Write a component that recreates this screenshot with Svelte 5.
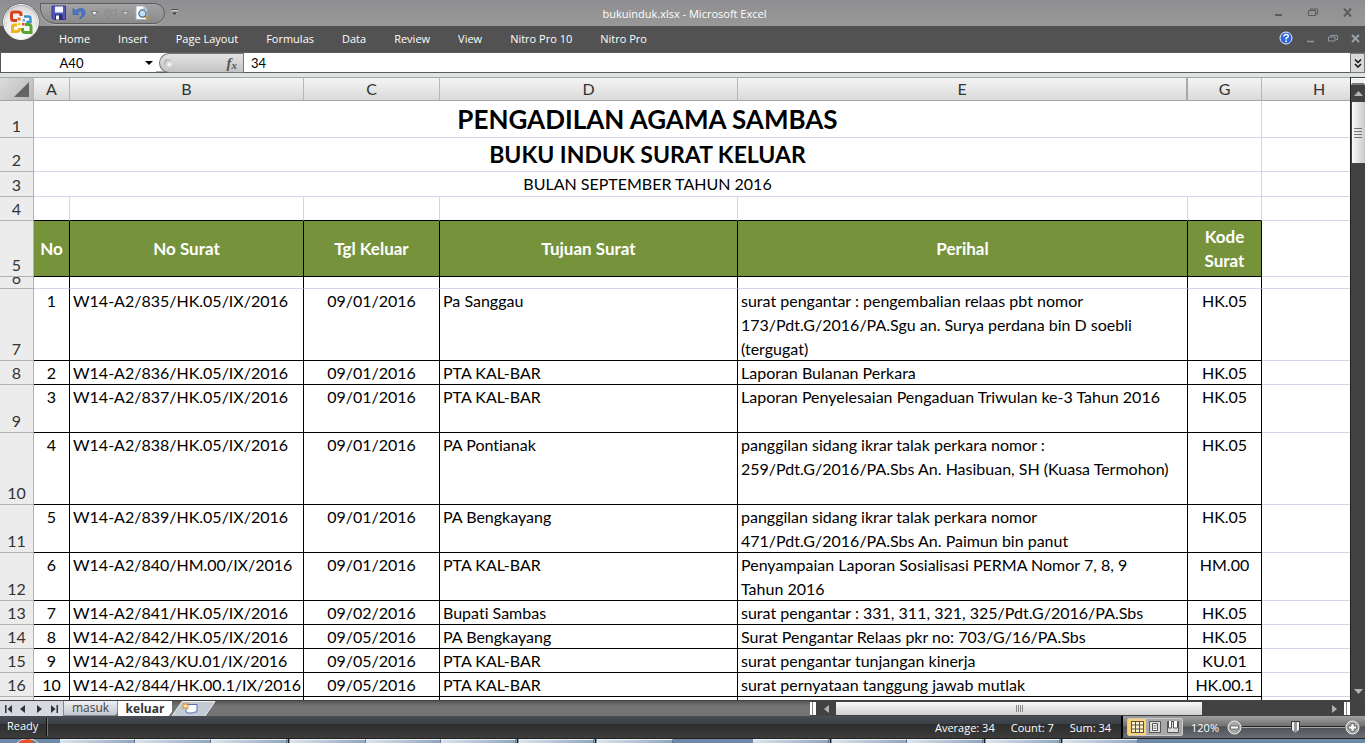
<script>
  const menus = ['Home', 'Insert', 'Page Layout', 'Formulas', 'Data', 'Review', 'View', 'Nitro Pro 10', 'Nitro Pro'];
  const letters = ['A', 'B', 'C', 'D', 'E', 'G', 'H'];
  const heads = ['No', 'No Surat', 'Tgl Keluar', 'Tujuan Surat', 'Perihal', 'Kode Surat'];
  const records = [
    { row: 7, lines: 3, cells: ['1', 'W14-A2/835/HK.05/IX/2016', '09/01/2016', 'Pa Sanggau', 'surat pengantar : pengembalian relaas pbt nomor\n173/Pdt.G/2016/PA.Sgu an. Surya perdana bin D soebli\n(tergugat)', 'HK.05'] },
    { row: 8, lines: 1, cells: ['2', 'W14-A2/836/HK.05/IX/2016', '09/01/2016', 'PTA KAL-BAR', 'Laporan Bulanan Perkara', 'HK.05'] },
    { row: 9, lines: 2, cells: ['3', 'W14-A2/837/HK.05/IX/2016', '09/01/2016', 'PTA KAL-BAR', 'Laporan Penyelesaian Pengaduan Triwulan ke-3 Tahun 2016', 'HK.05'] },
    { row: 10, lines: 3, cells: ['4', 'W14-A2/838/HK.05/IX/2016', '09/01/2016', 'PA Pontianak', 'panggilan sidang ikrar talak perkara nomor :\n259/Pdt.G/2016/PA.Sbs An. Hasibuan, SH (Kuasa Termohon)', 'HK.05'] },
    { row: 11, lines: 2, cells: ['5', 'W14-A2/839/HK.05/IX/2016', '09/01/2016', 'PA Bengkayang', 'panggilan sidang ikrar talak perkara nomor\n471/Pdt.G/2016/PA.Sbs An. Paimun bin panut', 'HK.05'] },
    { row: 12, lines: 2, cells: ['6', 'W14-A2/840/HM.00/IX/2016', '09/01/2016', 'PTA KAL-BAR', 'Penyampaian Laporan Sosialisasi PERMA Nomor 7, 8, 9\nTahun 2016', 'HM.00'] },
    { row: 13, lines: 1, cells: ['7', 'W14-A2/841/HK.05/IX/2016', '09/02/2016', 'Bupati Sambas', 'surat pengantar : 331, 311, 321, 325/Pdt.G/2016/PA.Sbs', 'HK.05'] },
    { row: 14, lines: 1, cells: ['8', 'W14-A2/842/HK.05/IX/2016', '09/05/2016', 'PA Bengkayang', 'Surat Pengantar Relaas pkr no: 703/G/16/PA.Sbs', 'HK.05'] },
    { row: 15, lines: 1, cells: ['9', 'W14-A2/843/KU.01/IX/2016', '09/05/2016', 'PTA KAL-BAR', 'surat pengantar tunjangan kinerja', 'KU.01'] },
    { row: 16, lines: 1, cells: ['10', 'W14-A2/844/HK.00.1/IX/2016', '09/05/2016', 'PTA KAL-BAR', 'surat pernyataan tanggung jawab mutlak', 'HK.00.1'] }
  ];
  const tasks = [
    ['gap', 60], ['task', 75], ['task', 76], ['task', 76], ['sep', 3], ['task', 76], ['task', 75], ['task', 75],
    ['sep', 3], ['task', 75], ['sep', 3], ['task', 76], ['gap', 80], ['task', 76], ['sep', 3], ['task', 75],
    ['task', 76], ['sep', 3], ['task', 74], ['sep', 3], ['task', 75]
  ];
  let zoom = $state(52);
</script>

<div class="app">
  <header class="title-bar">
    <button class="office" aria-label="Office Button">
      <svg width="40" height="40" viewBox="0 0 40 40">
        <defs>
          <radialGradient id="orb" cx=".5" cy=".75" r=".75">
            <stop offset="0" stop-color="#fff" /><stop offset=".55" stop-color="#eeeeef" /><stop offset="1" stop-color="#a9aaad" />
          </radialGradient>
        </defs>
        <circle cx="20" cy="20" r="18.5" fill="#555" />
        <circle cx="20" cy="20" r="17.5" fill="url(#orb)" stroke="#f4f4f4" />
        <path d="M4 20a16 16 0 0 1 32 0q-16-5-32 0z" fill="#fff" opacity=".45" />
        <g fill="none" stroke-width="3">
          <path d="M16 18.500H12.500a2 2 0 0 1-2-2V12q0-2 2-2H17q3 0 3 2.500V14" stroke="#d8431c" />
          <path d="M23 14.500h4.500q2 0 2 2v3.500h-4" stroke="#3c8fcc" stroke-width="2.400" />
          <path d="M24 22.500h3.500q2.500 0 2.500 2.500v5.500h-5.500q-3 0-3-2.500V26" stroke="#5aa52e" />
          <path d="M16 23h-2.500q-2 0-2 2v4.500h4q3 0 3-3V26" stroke="#efb51d" />
        </g>
        <path d="M16.500 15.500h3v3h-3z" fill="#e76a2d" /><path d="M21.500 17h2.500v2.500h-2.500z" fill="#6aaedd" /><path d="M17 21h2.500v2.500H17z" fill="#f4c83c" /><path d="M21 21h2.500v2.500H21z" fill="#d5552a" />
      </svg>
    </button>
    <div class="quick">
      <button aria-label="Save"><svg width="16" height="16" viewBox="0 0 16 16"><path d="M1 1h13.500v13.500H2.500L1 13z" fill="#5358bd" stroke="#343795" /><path d="M4 1.500h8v6H4z" fill="#f4f6ff" /><path d="M4 9.500h7.500v5H4z" fill="#272a6d" /><path d="M5 10.500h3v4H5z" fill="#fff" /></svg></button>
      <button aria-label="Undo"><svg width="14" height="14" viewBox="0 0 14 14"><path d="M1 2.500v6h6L5 6.500q4-3 5 0 .6 3-2.500 6.500 6-3 5.500-7.500Q11.500 0 3.200 4.500z" fill="#4a78cf" stroke="#2b55a8" stroke-width=".6" /></svg></button>
      <button aria-label="Undo list"><svg width="7" height="5" viewBox="0 0 7 5"><path d="M.5.5h6L3.500 4.500z" fill="#fff" stroke="#555" stroke-width=".7" /></svg></button>
      <button aria-label="Redo" disabled><svg width="14" height="14" viewBox="0 0 14 14"><path d="M13 3v6H7.500L9.500 7Q5 3 3.500 7q-.5 3 2.500 5.500-5-2-4.500-6.500Q3 1 11 5z" fill="#9b9ca0" stroke="#818286" stroke-width=".6" /></svg></button>
      <button aria-label="Redo list" disabled><svg width="7" height="5" viewBox="0 0 7 5"><path d="M.5.5h6L3.500 4.500z" fill="#ccc" stroke="#777" stroke-width=".7" /></svg></button>
      <button aria-label="Print Preview"><svg width="16" height="16" viewBox="0 0 16 16"><path d="M2 1h8l3 3v10.500H2z" fill="#fff" stroke="#a5b1c4" /><path d="M10 1v3h3" fill="#d5deeb" stroke="#8293ad" stroke-width=".7" /><path d="M11 11l3.500 3.500" stroke="#c98f26" stroke-width="2.400" /><circle cx="8.500" cy="8.500" r="3.600" fill="#bfe0f4" stroke="#536985" stroke-width="1.300" /></svg></button>
    </div>
    <button class="custom" aria-label="Customize Quick Access Toolbar"><svg width="7" height="8" viewBox="0 0 7 8"><path d="M0 .5h7" stroke="#4b4b4b" /><path d="M0 1.500h7" stroke="#ccc" /><path d="M.5 3h6L3.500 7z" fill="#444" stroke="#ccc" stroke-width=".5" /></svg></button>
    <h1>bukuinduk.xlsx - Microsoft Excel</h1>
    <div class="window-buttons">
      <button aria-label="Minimize"><svg width="9" height="9" viewBox="0 0 9 9"><path d="M1 7h7" stroke="#5b5b5b" stroke-width="2" /></svg></button>
      <button aria-label="Restore"><svg width="10" height="9" viewBox="0 0 10 9"><path d="M2.500 2.500V1h7v5H8M.5 2.500h7v5h-7z" fill="none" stroke="#5b5b5b" /></svg></button>
      <button aria-label="Close"><svg width="9" height="9" viewBox="0 0 9 9"><path d="M1 .5l7 8M8 .5l-7 8" stroke="#5b5b5b" stroke-width="2" /></svg></button>
    </div>
  </header>

  <nav class="ribbon" aria-label="Ribbon">
    {#each menus as m}<button>{m}</button>{/each}
    <div class="book-buttons">
      <button aria-label="Help"><svg width="14" height="14" viewBox="0 0 14 14"><circle cx="7" cy="7" r="6" fill="#2d67dd" stroke="#e6efff" /><path d="M4.800 5.500Q5 3.500 7.200 3.500T9.300 5.300Q9.200 6.500 7.100 7.300V8.500" fill="none" stroke="#fff" stroke-width="1.500" /><path d="M6.300 9.500H8V11H6.300z" fill="#fff" /></svg></button>
      <button aria-label="Minimize workbook"><svg width="9" height="9" viewBox="0 0 9 9"><path d="M1 7.500h7" stroke="#8e97a2" stroke-width="1.500" /></svg></button>
      <button aria-label="Restore workbook"><svg width="10" height="9" viewBox="0 0 10 9"><path d="M2.500 2.500V1.500h7v4H8M.5 3h6.500v4H.5z" fill="none" stroke="#8e97a2" /></svg></button>
      <button aria-label="Close workbook"><svg width="9" height="9" viewBox="0 0 9 9"><path d="M1 1l7 7M8 1l-7 7" stroke="#98a1ac" stroke-width="2" /></svg></button>
    </div>
  </nav>

  <div class="formula-bar">
    <input class="name-box" aria-label="Name Box" value="A40" />
    <button class="name-list" aria-label="Name list"><svg width="8" height="4" viewBox="0 0 8 4"><path d="M0 0h8L4 4z" /></svg></button>
    <div class="fx-area">
      <span class="knob"></span>
      <button aria-label="Insert Function"><i>f</i><i class="sub">x</i></button>
    </div>
    <input class="formula" aria-label="Formula Bar" value="34" />
    <button class="expand" aria-label="Expand Formula Bar"><svg width="8" height="9" viewBox="0 0 8 9"><path d="M1 .5l3 3 3-3M1 5l3 3 3-3" fill="none" stroke="#111" stroke-width="1.500" /></svg></button>
  </div>

  <main>
    <div class="sheet">
      <table>
        <colgroup>
          <col class="c-num" /><col class="c-a" /><col class="c-b" /><col class="c-c" /><col class="c-d" /><col class="c-e" /><col class="c-g" /><col />
        </colgroup>
        <thead>
          <tr>
            <th class="corner"><svg width="15" height="15" viewBox="0 0 15 15"><path d="M15 0v15H0z" fill="#646464" /></svg></th>
            {#each letters as l}<th scope="col" class:hidden-next={l === 'E'} class:last={l === 'H'}>{l}</th>{/each}
          </tr>
        </thead>
        <tbody>
          <tr class="r1"><th scope="row">1</th><td colspan="6" class="big">PENGADILAN AGAMA SAMBAS</td><td></td></tr>
          <tr class="r2"><th scope="row">2</th><td colspan="6" class="mid">BUKU INDUK SURAT KELUAR</td><td></td></tr>
          <tr class="r3"><th scope="row">3</th><td colspan="6" class="center">BULAN SEPTEMBER TAHUN 2016</td><td></td></tr>
          <tr class="r4"><th scope="row">4</th>{#each heads as _}<td></td>{/each}<td></td></tr>
          <tr class="r5"><th scope="row">5</th>{#each heads as h}<td class="head">{h}</td>{/each}<td></td></tr>
          <tr class="r6"><th scope="row"><div class="clip">6</div></th>{#each heads as _}<td></td>{/each}<td></td></tr>
          {#each records as r}
            <tr class="rec lines-{r.lines}">
              <th scope="row">{r.row}</th>
              {#each r.cells as c}<td><div class="cell">{c}</div></td>{/each}
              <td></td>
            </tr>
          {/each}
          <tr class="rec lines-1"><th scope="row"></th>{#each heads as _}<td></td>{/each}<td></td></tr>
        </tbody>
      </table>
    </div>
    <div class="v-scroll">
      <span class="split"></span>
      <button aria-label="Scroll up"><svg width="9" height="5" viewBox="0 0 9 5"><path d="M0 5h9L4.500 0z" fill="#b4b4b4" /></svg></button>
      <span class="v-thumb"><i></i><i></i><i></i><i></i></span>
      <button class="down" aria-label="Scroll down"><svg width="9" height="5" viewBox="0 0 9 5"><path d="M0 0h9L4.500 5z" fill="#b4b4b4" /></svg></button>
    </div>
  </main>

  <div class="tab-bar">
    <div class="tab-nav">
      <button aria-label="First sheet"><svg width="7" height="8" viewBox="0 0 7 8"><path d="M0 0h1.500v8H0zM7 0v8L2.500 4z" fill="#333" /></svg></button>
      <button aria-label="Previous sheet"><svg width="7" height="8" viewBox="0 0 7 8"><path d="M5 0v8L0 4z" fill="#333" /></svg></button>
      <button aria-label="Next sheet"><svg width="7" height="8" viewBox="0 0 7 8"><path d="M1 0v8l5-4z" fill="#333" /></svg></button>
      <button aria-label="Last sheet"><svg width="7" height="8" viewBox="0 0 7 8"><path d="M5.500 0H7v8H5.500zM0 0v8l4.500-4z" fill="#333" /></svg></button>
    </div>
    <button class="tab">masuk</button>
    <button class="tab active">keluar</button>
    <button class="new-tab" aria-label="Insert Worksheet">
      <svg width="44" height="15" viewBox="0 0 44 15">
        <path d="M0 15L10 .5H43L33 15z" fill="#c3cad3" /><path d="M0 15L10 .5H43L33 15" fill="none" stroke="#eef1f5" />
        <path d="M14 3.500h11v7q-4 2-9 1.500l-2-1z" fill="#fafcff" stroke="#5773ad" /><path d="M25 8l-3 4h3z" fill="#8aa1cf" />
        <path d="M13.500 1v8M9.500 5h8M10.500 2l6 6M16.500 2l-6 6" stroke="#e8962e" stroke-width="1.200" /><circle cx="13.500" cy="5" r="1.500" fill="#fff2b5" />
      </svg>
    </button>
    <div class="h-scroll">
      <span class="h-split"></span>
      <button aria-label="Scroll left"><svg width="5" height="8" viewBox="0 0 5 8"><path d="M5 0v8L0 4z" fill="#b4b4b4" /></svg></button>
      <div class="h-track"><span class="h-thumb"><i></i><i></i><i></i><i></i></span></div>
      <button aria-label="Scroll right"><svg width="5" height="8" viewBox="0 0 5 8"><path d="M0 0v8l5-4z" fill="#b4b4b4" /></svg></button>
      <span class="h-split"></span>
    </div>
  </div>

  <footer class="status">
    <span class="ready">Ready</span>
    <span class="stat">Average: 34</span><span class="stat">Count: 7</span><span class="stat">Sum: 34</span>
    <div class="view-zone">
      <div class="views">
        <button class="on" aria-label="Normal"><svg width="13" height="12" viewBox="0 0 13 12"><path d="M0 0h13v12H0z" fill="#56534a" /><path d="M1 1h3v2.500H1zM5 1h3v2.500H5zM9 1h3v2.500H9zM1 4.500h3v3H1zM5 4.500h3v3H5zM9 4.500h3v3H9zM1 8.500h3V11H1zM5 8.500h3V11H5zM9 8.500h3V11H9z" fill="#fff5cc" /></svg></button>
        <button aria-label="Page Layout"><svg width="12" height="12" viewBox="0 0 12 12"><path d="M.5.5h11v11H.5z" fill="#ddd" stroke="#555" /><path d="M3.500 2.500h5v7h-5z" fill="#fff" stroke="#555" /><path d="M4.500 4.500h3M4.500 6h3M4.500 7.500h3" stroke="#777" stroke-width=".8" /></svg></button>
        <button aria-label="Page Break Preview"><svg width="12" height="12" viewBox="0 0 12 12"><path d="M.5.5h11v11H.5z" fill="#ddd" stroke="#555" /><path d="M1.500 0v7h3V0M6.500 0v7h4V0" fill="#fff" stroke="#555" /></svg></button>
      </div>
      <button class="percent">120%</button>
      <button class="round" aria-label="Zoom out"><svg width="15" height="15" viewBox="0 0 15 15"><circle cx="7.500" cy="7.500" r="6.500" fill="#a7a7a7" stroke="#ededed" /><path d="M3.500 6h8v3h-8z" fill="#fff" stroke="#555" stroke-width=".8" /></svg></button>
      <input type="range" aria-label="Zoom" min="0" max="100" bind:value={zoom} />
      <button class="round" aria-label="Zoom in"><svg width="15" height="15" viewBox="0 0 15 15"><circle cx="7.500" cy="7.500" r="6.500" fill="#a7a7a7" stroke="#ededed" /><path d="M6 3.500h3V6h2.500v3H9v2.500H6V9H3.500V6H6z" fill="#fff" stroke="#555" stroke-width=".8" /></svg></button>
    </div>
  </footer>

  <div class="taskbar">
    <span class="start"></span>
    {#each tasks as [kind, w]}<span class={kind} style="width:{w}px"></span>{/each}
  </div>
</div>

<style>
  :global(body) { margin: 0; overflow: hidden; }
  * { box-sizing: border-box; }
  .app { height: 100vh; display: flex; flex-direction: column; overflow: hidden; font-family: "Open Sans", "Noto Sans", sans-serif; font-size: 11px; background: #fff; }
  button { border: 0; padding: 0; margin: 0; background: none; font: inherit; color: inherit; display: flex; align-items: center; justify-content: center; }
  svg { display: block; flex: none; }

  .title-bar { position: relative; flex: none; height: 26px; display: flex; align-items: center; background: linear-gradient(#8d8d93, #929292 30%, #989898); padding-left: 40px; }
  .office { position: absolute; left: 1px; top: 2px; z-index: 2; }
  .quick { height: 21px; width: 125px; padding: 0 10px 0 10px; display: flex; align-items: center; gap: 5px; border: 1px solid #5c5c5c; border-radius: 0 11px 11px 16px; background: linear-gradient(#a3a3a3, #8a8a8a); box-shadow: 0 1px 0 #b5b5b5; }
  .custom { margin-left: 6px; }
  h1 { flex: 1; margin: 0; font-weight: 400; font-size: 11px; color: #fff; text-align: center; padding: 0 0 0 44px; }
  .window-buttons { display: flex; gap: 25px; padding: 0 13px 2px 0; width: 218px; justify-content: flex-end; }

  .ribbon { flex: none; height: 26px; background: #525252; color: #fff; display: flex; align-items: center; padding: 0 5px 2px 59px; gap: 28px; }
  .book-buttons { margin-left: auto; display: flex; align-items: center; gap: 13px; }

  .formula-bar { flex: none; height: 25px; padding: 1px 0 4px; display: flex; background: linear-gradient(#5c5c5c 1px, #fff 1px 19px, #5c5c5c 20px 21px, #dfe3e3 21px); }
  input { font: inherit; border: 0; outline: 0; min-width: 0; padding: 0; }
  .name-box { width: 142px; text-align: center; background: #fff; font: 13px Lato, "Open Sans", sans-serif; border-left: 1px solid #555; border-bottom: 1px solid #5c5c5c; }
  .name-list { width: 14px; background: #fff; border-bottom: 1px solid #5c5c5c; }
  .fx-area { width: 84px; margin-left: 3px; display: flex; align-items: center; justify-content: space-between; border: 1px solid #777; border-right: 0; border-radius: 11px 0 0 11px; background: linear-gradient(#e4e4e4, #c3c3c3); padding: 0 6px 0 4px; }
  .knob { width: 8px; height: 8px; border-radius: 50%; background: radial-gradient(circle at 70% 70%, #fff, #999); }
  .fx-area button { font-family: "Liberation Serif", serif; font-size: 15px; font-weight: 700; color: #555; }
  .sub { font-size: 11px; padding-top: 3px; }
  .formula { flex: 1; padding-left: 7px; font: 13px Lato, "Open Sans", sans-serif; background: #fff; border-left: 1px solid #777; border-bottom: 1px solid #5c5c5c; }
  .expand { width: 15px; background: #d8d8d8; border: 1px solid #777; }

  main { flex: 1; min-height: 0; display: flex; }
  .sheet { flex: 1; min-width: 0; overflow: hidden; }
  table { width: 100%; table-layout: fixed; border-collapse: separate; border-spacing: 0; font: 16px/24px Lato, "Open Sans", sans-serif; font-variant-ligatures: none; color: #000; }
  .c-num { width: 34px; } .c-a { width: 36px; } .c-b { width: 234px; } .c-c { width: 136px; }
  .c-d { width: 298px; } .c-e { width: 450px; } .c-g { width: 74px; }
  th { font-weight: 400; color: #333; padding: 0; }
  thead th { height: 24px; line-height: 22px; background: linear-gradient(#f4f4f4, #dadada); border: solid #a6a6a6; border-width: 1px 1px 1px 0; border-right-color: #b6b6b6; }
  thead th.hidden-next { border-right: 2px solid #a9a9a9; }
  thead th.last { border-right: 0; padding-left: 26px; }
  thead .corner { background: linear-gradient(135deg, #dcdcdc, #b8b8b8); }
  .corner svg { margin: 0 4px 0 auto; }
  tbody th { background: #ececec; border-right: 1px solid #b1b1b1; border-bottom: 1px solid #b1b1b1; vertical-align: bottom; line-height: 22px; }
  td { padding: 0 3px; border-right: 1px solid #d0d7e5; border-bottom: 1px solid #d0d7e5; vertical-align: top; }
  td:last-child { border-right: 0; }
  .r1 { height: 37px; } .r2 { height: 34px; } .r3 { height: 25px; } .r4 { height: 24px; } .r5 { height: 56px; } .r6 { height: 12px; }
  .big, .mid, .center { text-align: center; vertical-align: middle; }
  .big { font-size: 26px; font-weight: 700; line-height: 36px; }
  .mid { font-size: 23px; font-weight: 700; line-height: 33px; }
  .r4 td:not(:last-child), .r5 td:not(:last-child) { border-bottom-color: #000; }
  .r5 td:not(:last-child), .r6 td:not(:last-child), .rec td:not(:last-child) { border-right-color: #000; }
  .rec td:not(:last-child) { border-bottom-color: #000; }
  .head { background: #76933c; color: #fff; font-size: 17px; font-weight: 700; text-align: center; vertical-align: middle; }
  .clip { height: 11px; overflow: hidden; display: flex; align-items: flex-end; justify-content: center; line-height: 21px; }
  .lines-1 { height: 24px; } .lines-2 { height: 48px; } .lines-3 { height: 72px; }
  .cell { white-space: pre; line-height: 24px; height: 23px; }
  .lines-2 .cell { height: 47px; }
  .lines-3 .cell { height: 71px; }
  .rec td:nth-child(2), .rec td:nth-child(4), .rec td:nth-child(7) { text-align: center; padding: 0; }

  .v-scroll { flex: none; width: 15px; background: #424242; border-left: 1px solid #222; display: flex; flex-direction: column; align-items: center; }
  .split { align-self: stretch; height: 7px; margin-top: 1px; background: #eee; border: 1px solid #fff; border-bottom: 2px solid #777; }
  .v-scroll button { height: 17px; width: 14px; }
  .v-thumb { width: 13px; height: 61px; background: linear-gradient(90deg, #fafafa, #c9c9c9); display: flex; flex-direction: column; align-items: center; justify-content: center; gap: 2px; }
  .v-thumb i { width: 8px; height: 1px; background: #777; }
  .v-scroll .down { margin-top: auto; }

  .tab-bar { flex: none; height: 16px; display: flex; background: linear-gradient(#555, #747474 5px, #747474); border-top: 1px solid #444; }
  .tab-nav { width: 63px; display: flex; justify-content: space-around; background: #d6dae0; padding: 0 1px; }
  .tab { width: 55px; font-size: 12px; line-height: 14px; background: linear-gradient(#eef0f3, #c2c8d1); color: #444; border: 1px solid #888; border-top: 0; clip-path: polygon(0 0, 100% 0, 100% 70%, 94% 100%, 0 100%); }
  .tab.active { width: 54px; background: #fff; font-weight: 700; border: 0; color: #333; }
  .new-tab { width: 44px; }
  .h-scroll { margin-left: auto; width: 555px; display: flex; align-items: stretch; background: #424242; padding-right: 15px; }
  .h-split { width: 6px; margin: 1px 0; background: linear-gradient(90deg, #fff 2px, #888 2px 3px, #fff 3px); }
  .h-scroll button { width: 20px; }
  .h-track { flex: 1; display: flex; }
  .h-thumb { width: 75%; margin: 1px 0; background: linear-gradient(#fafafa, #d0d0d0); display: flex; align-items: center; justify-content: center; gap: 1px; }
  .h-thumb i { width: 1px; height: 7px; background: #888; }

  .status { flex: none; height: 22px; display: flex; align-items: center; color: #fff; background: linear-gradient(#484c55, #3b3f47 8px, #2d2d2d 8px, #3c3c3b); }
  .ready { flex: 1; padding-left: 7px; }
  .ready::after { content: ""; display: inline-block; width: 1px; height: 18px; margin-left: 8px; background: #111; border-right: 1px solid #777; vertical-align: middle; }
  .stat { padding-right: 16px; }
  .view-zone { margin-left: -6px; width: 244px; height: 22px; display: flex; align-items: center; border-left: 2px solid #000; background: linear-gradient(#a0a0a0, #707070 45%, #4e5258 50%, #6b6f75); padding-left: 4px; }
  .views { display: flex; border: 1px solid #ccc; border-radius: 2px; height: 18px; background: #a9a9a9; }
  .views button { width: 18px; height: 16px; }
  .views .on { background: #fbd374; }
  .percent { width: 36px; margin-left: 4px; }
  .round { margin-left: 4px; }
  input[type='range'] { appearance: none; width: 103px; height: 16px; margin: 0; background: linear-gradient(transparent 7px, #222 7px 8px, #aaa 8px 9px, transparent 9px); }
  input[type='range'] + .round { margin-left: 0; }
  input[type='range']::-webkit-slider-thumb { appearance: none; width: 9px; height: 12px; background: linear-gradient(90deg, #333 1px, #f2f2f2 1px 3px, #999 3px 6px, #f2f2f2 6px 8px, #333 8px); border-top: 1px solid #333; clip-path: polygon(0 0, 100% 0, 100% 65%, 50% 100%, 0 65%); }

  .taskbar { position: relative; flex: none; height: 5px; display: flex; background: #7189a8; border-top: 1px solid #222; overflow: hidden; }
  .start { position: absolute; left: 12px; top: -1px; width: 31px; height: 31px; border-radius: 50%; border: 1px solid #d7e6f2; background: radial-gradient(circle at 45% 15%, #e9552d 0 5px, #5b7f9f 9px); }
  .gap { flex: none; background: #7189a8; }
  .task { flex: none; background: linear-gradient(100deg, #dce4ec, #91a5bd); border-top: 1px solid #eef3f8; border-right: 1px solid #61758e; }
  .sep { flex: none; background: #222; border: 1px solid #8899aa; border-width: 0 1px; }
</style>
